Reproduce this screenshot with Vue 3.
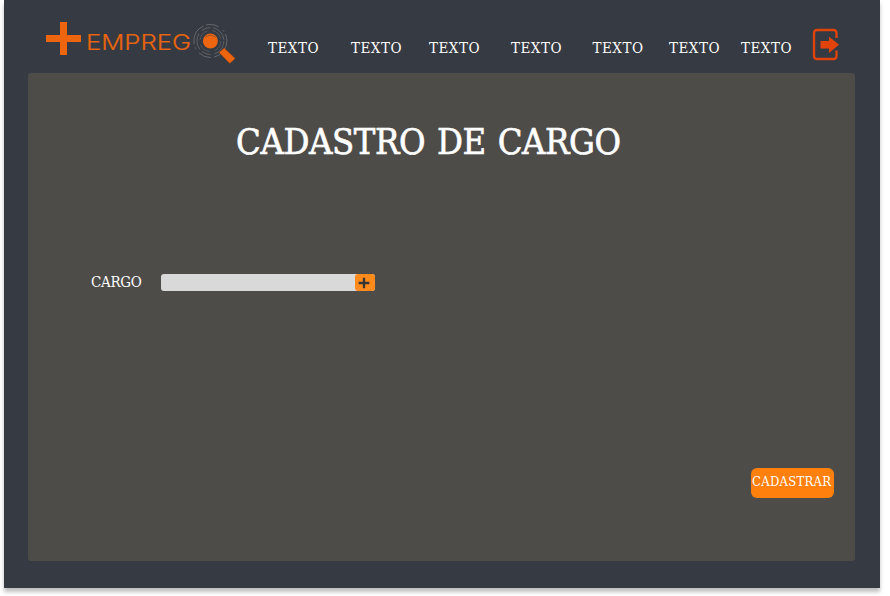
<script setup>
const links = [
  { id: 1, label: 'TEXTO', width: 83 },
  { id: 2, label: 'TEXTO', width: 78 },
  { id: 3, label: 'TEXTO', width: 82 },
  { id: 4, label: 'TEXTO', width: 81.5 },
  { id: 5, label: 'TEXTO', width: 76.5 },
  { id: 6, label: 'TEXTO', width: 72 },
  { id: 7, label: 'TEXTO', width: 72 },
]
</script>

<template>
  <div class="window">
    <header class="topbar">
      <svg class="logo" width="196" height="50" viewBox="0 0 196 50" role="img" aria-label="+ Emprego">
        <path d="M16 7h7v13h14v7h-14v13h-7v-13h-14v-7h14z" fill="#ed650f" />
        <text class="brand" x="42" y="34.500" textLength="105" lengthAdjust="spacingAndGlyphs">EMPREG</text>
        <g fill="none" stroke="#73777b" stroke-width="1">
          <circle cx="166.400" cy="26" r="16.500" stroke-dasharray="22 3 13 5 2 3" stroke-opacity=".75" />
          <circle cx="166.400" cy="26" r="13.500" stroke-dasharray="17 4 9 3" stroke-opacity=".65" />
          <circle cx="166.400" cy="26" r="10.500" stroke-dasharray="12 5" stroke-opacity=".45" />
        </g>
        <circle cx="166.400" cy="26" r="7.500" fill="#ed650f" />
        <path d="M161.500 22q5-3.500 10 0" fill="none" stroke="#9b572a" stroke-width="1" />
        <path d="M175 37.500l5.200-4.500 11 10.500-5.400 5z" fill="#ed650f" stroke="#843f16" stroke-width=".8" stroke-dasharray="1 1" />
      </svg>
      <nav class="nav">
        <a v-for="link in links" :key="link.id" :style="{ width: link.width + 'px' }">{{ link.label }}</a>
      </nav>
      <svg class="exit" width="28" height="34" viewBox="0 0 28 34" role="img" aria-label="Sair">
        <path d="M24.500 10V5q0-3-3-3H5Q2 2 2 5v23q0 3 3 3h16.500q3 0 3-3v-5.500" fill="none" stroke="#e2430b" stroke-width="2.300" />
        <path d="M8.500 13h8.500V8.500l10 8.200-10 8.300v-4.500H8.500z" fill="#e2430b" />
      </svg>
    </header>

    <main class="panel">
      <h1>CADASTRO DE CARGO</h1>
      <form class="row" @submit.prevent>
        <label for="cargo">CARGO</label>
        <div class="field">
          <input id="cargo" type="text" />
          <button class="add" type="button" aria-label="Adicionar">
            <svg width="12" height="12" viewBox="0 0 12 12"><path d="M6 .7v10.600M.7 6h10.600" stroke="#353534" stroke-width="2.300" /></svg>
          </button>
        </div>
      </form>
      <button class="submit" type="button">CADASTRAR</button>
    </main>
  </div>
</template>

<style>
body {
  margin: 0;
  min-height: 596px;
  background: #fff;
}
</style>

<style scoped>
.window {
  box-sizing: border-box;
  width: 876px;
  height: 588px;
  margin-left: 4px;
  padding: 0 25px 27px 24px;
  background: #363a42;
  box-shadow: 0 4px 4px rgba(0, 0, 0, 0.25);
  font-family: "Roboto Slab", "DejaVu Serif Condensed", "DejaVu Serif", serif;
  font-stretch: condensed;
  color: #fff;
}
.topbar {
  display: flex;
  height: 73px;
  align-items: flex-start;
}
.logo {
  flex: none;
  margin: 15px 0 0 16px;
}
.brand {
  font: 300 21px Inter, sans-serif;
  fill: #e9650f;
  stroke: #e9650f;
  stroke-width: 0.2px;
}
.nav {
  display: flex;
  width: 545px;
  flex: none;
  margin: 38px 0 0 28px;
}
.nav a {
  flex: none;
  font-size: 15px;
  line-height: 20px;
  letter-spacing: 0.5px;
}
.exit {
  flex: none;
  margin: 28px 0 0 -1px;
}
.panel {
  display: flex;
  flex-direction: column;
  box-sizing: border-box;
  width: 827px;
  height: 488px;
  border-radius: 3px;
  background: #4e4c49;
}
h1 {
  margin: 45px 0 0 208px;
  font-size: 36px;
  line-height: 48px;
  font-weight: 400;
  letter-spacing: -0.4px;
  word-spacing: 2px;
  white-space: nowrap;
  -webkit-text-stroke: 0.6px #fff;
}
.row {
  display: flex;
  align-items: center;
  height: 20px;
  margin: 106px 0 0 63px;
}
label {
  width: 70px;
  font-size: 15px;
  line-height: 20px;
  letter-spacing: -0.3px;
}
.field {
  display: flex;
  width: 214px;
  height: 17px;
  margin-top: 1px;
  border-radius: 3px;
  background: #d9d9d9;
}
input {
  flex: 1;
  min-width: 0;
  padding: 0 4px;
  border: 0;
  outline: 0;
  background: transparent;
}
.add {
  display: flex;
  align-items: center;
  justify-content: center;
  width: 20px;
  padding: 0 2px 0 0;
  border: 0;
  border-radius: 3px;
  background: #ff8a1c;
}
.submit {
  align-self: flex-end;
  width: 83px;
  height: 30px;
  margin: 176px 21px 0 0;
  padding: 0 0 3px 1px;
  border: 0;
  border-radius: 6px;
  background: #ff800d;
  color: #fff;
  font: inherit;
  font-size: 13px;
  line-height: 18px;
  letter-spacing: 0.25px;
  text-align: left;
  white-space: nowrap;
}
</style>
